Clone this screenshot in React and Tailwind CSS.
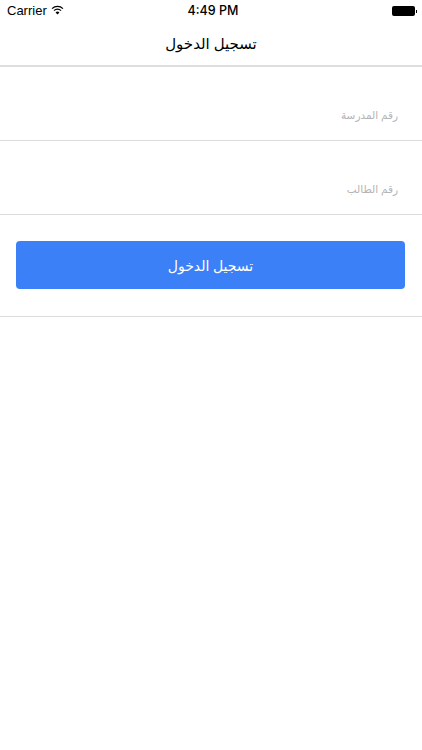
const arabicFont = "font-['Noto_Sans','DejaVu_Sans',sans-serif]";

const Wifi = () => (
  <svg width="13" height="10" viewBox="0 0 14 11" fill="none" stroke="#000" className="ml-[4px] mb-[2px]">
    <path d="M1 4 A8.5 8.5 0 0 1 13 4" strokeWidth="1.4" />
    <path d="M3.2 6.2 A5.4 5.4 0 0 1 10.8 6.2" strokeWidth="1.4" />
    <path d="M7 10.5 L4.9 8.2 A3 3 0 0 1 9.1 8.2 Z" fill="#000" stroke="none" />
  </svg>
);

const Battery = () => (
  <div className="flex items-center">
    <div className="w-[23px] h-[10px] bg-black rounded-[2px]" />
    <div className="w-[1px] h-[3px] bg-black ml-[1px]" />
  </div>
);

const Field = ({ label }) => (
  <div className="h-[74px] border-b border-[#dcdcdc] flex justify-end items-end pb-[14px] pr-[24px]">
    <span dir="rtl" className={`text-[10.5px] leading-[22px] text-[#b4b4b4] ${arabicFont}`}>{label}</span>
  </div>
);

export default function App() {
  return (
    <div className="w-[422px] h-[750px] bg-white overflow-hidden font-['Liberation_Sans',sans-serif]">
      <div className="h-[22px] relative flex items-center justify-between pl-[7px] pr-[5px] text-black">
        <div className="flex items-center text-[13px]">
          Carrier
          <Wifi />
        </div>
        <div className="absolute left-[4px] right-0 text-center text-[12.5px] font-medium font-['Inter',sans-serif]">4:49 PM</div>
        <Battery />
      </div>
      <div className="h-[45px] border-b-2 border-[#dedede] flex items-center justify-center">
        <span dir="rtl" className={`text-[15px] text-black ${arabicFont}`}>تسجيل الدخول</span>
      </div>
      <Field label="رقم المدرسة" />
      <Field label="رقم الطالب" />
      <div className="h-[102px] border-b border-[#dcdcdc] px-[16px] pt-[26px]">
        <button className={`w-[389px] h-[48px] bg-[#3b80f7] rounded-[4px] text-white text-[14px] ${arabicFont}`}>
          <span dir="rtl">تسجيل الدخول</span>
        </button>
      </div>
    </div>
  );
}
